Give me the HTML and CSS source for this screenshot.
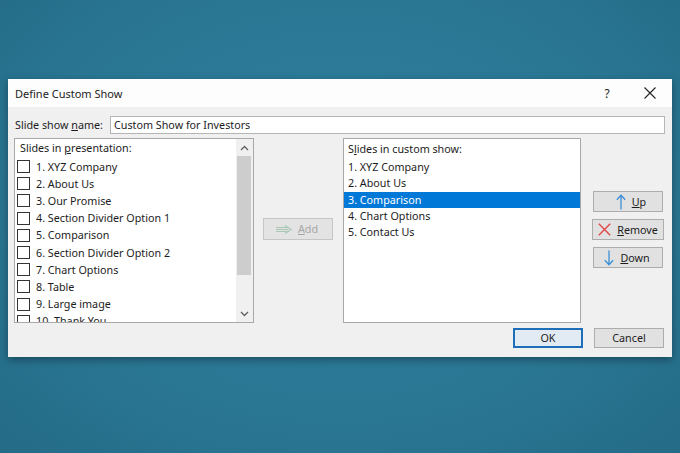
FILE: index.html
```html
<!DOCTYPE html>
<html lang="en">
<head>
<meta charset="utf-8">
<title>Define Custom Show</title>
<link rel="stylesheet" href="styles.css">
</head>
<body>
<div class="stage">
  <div class="dialog">
    <div class="titlebar">
      <span class="title">Define Custom Show</span>
      <span class="help">?</span>
      <span class="close">
        <svg width="12" height="12" viewBox="0 0 12 12"><path d="M0.5 0.5 L11.5 11.5 M11.5 0.5 L0.5 11.5" stroke="#222" stroke-width="1.1" fill="none"/></svg>
      </span>
    </div>
    <div class="content">
      <div class="name-row">
        <span class="name-label">Slide show <u>n</u>ame:</span>
        <div class="name-input">Custom Show for Investors</div>
      </div>
      <div class="main">
        <div class="listbox left-list">
          <div class="list-inner">
            <div class="list-head">Slides in <u>p</u>resentation:</div>
            <div class="check-row"><span class="cb"></span>1. XYZ Company</div>
            <div class="check-row"><span class="cb"></span>2. About Us</div>
            <div class="check-row"><span class="cb"></span>3. Our Promise</div>
            <div class="check-row"><span class="cb"></span>4. Section Divider Option 1</div>
            <div class="check-row"><span class="cb"></span>5. Comparison</div>
            <div class="check-row"><span class="cb"></span>6. Section Divider Option 2</div>
            <div class="check-row"><span class="cb"></span>7. Chart Options</div>
            <div class="check-row"><span class="cb"></span>8. Table</div>
            <div class="check-row"><span class="cb"></span>9. Large image</div>
            <div class="check-row"><span class="cb"></span>10. Thank You</div>
          </div>
          <div class="scrollbar">
            <div class="sb-arrow">
              <svg width="9" height="6" viewBox="0 0 9 6"><path d="M1 5 L4.5 1.5 L8 5" stroke="#606060" stroke-width="1.3" fill="none"/></svg>
            </div>
            <div class="sb-track"><div class="sb-thumb"></div></div>
            <div class="sb-arrow">
              <svg width="9" height="6" viewBox="0 0 9 6"><path d="M1 1 L4.5 4.5 L8 1" stroke="#606060" stroke-width="1.3" fill="none"/></svg>
            </div>
          </div>
        </div>
        <div class="mid">
          <div class="btn add">
            <svg class="ico" width="16" height="9" viewBox="0 0 16 9"><path d="M0 2.5 H11 M0 6.5 H11 M0 4.5 H12 M9 0.5 L15 4.5 L9 8.5" stroke="#aac6b4" stroke-width="1.2" fill="none"/></svg>
            <span><u>A</u>dd</span>
          </div>
        </div>
        <div class="listbox right-list">
          <div class="list-head">S<u>l</u>ides in custom show:</div>
          <div class="row">1. XYZ Company</div>
          <div class="row">2. About Us</div>
          <div class="row selected">3. Comparison</div>
          <div class="row">4. Chart Options</div>
          <div class="row">5. Contact Us</div>
        </div>
        <div class="side">
          <div class="btn side-btn up">
            <svg class="ico" width="10" height="16" viewBox="0 0 10 16"><path d="M5 15.5 V1.5 M0.8 5.8 L5 1.2 L9.2 5.8" stroke="#3d8fd6" stroke-width="1.3" fill="none"/></svg>
            <span><u>U</u>p</span>
          </div>
          <div class="btn side-btn remove">
            <svg class="ico" width="13" height="13" viewBox="0 0 13 13"><path d="M0.8 0.8 L12.2 12.2 M12.2 0.8 L0.8 12.2" stroke="#e0484a" stroke-width="1.4" fill="none"/></svg>
            <span><u>R</u>emove</span>
          </div>
          <div class="btn side-btn down">
            <svg class="ico" width="10" height="16" viewBox="0 0 10 16"><path d="M5 0.5 V14.5 M0.8 10.2 L5 14.8 L9.2 10.2" stroke="#3d8fd6" stroke-width="1.3" fill="none"/></svg>
            <span><u>D</u>own</span>
          </div>
        </div>
      </div>
      <div class="footer">
        <div class="btn dlg-btn ok">OK</div>
        <div class="btn dlg-btn cancel">Cancel</div>
      </div>
    </div>
  </div>
</div>
</body>
</html>
```

FILE: styles.css
```css
* { box-sizing: border-box; }

html, body {
  margin: 0;
  height: 100%;
}

body {
  background: radial-gradient(ellipse at 50% 45%, #2e7f9d 0%, #2a7794 60%, #246b87 100%);
  font-family: "Noto Sans", "Open Sans", sans-serif;
  font-size: 10.75px;
  color: #1c1c1c;
  overflow: hidden;
}

.stage {
  padding: 79px 8px 0 8px;
}

.dialog {
  width: 664px;
  height: 278px;
  background: #f0f0f0;
  box-shadow: 0 3px 8px rgba(0, 0, 0, 0.35);
  display: flex;
  flex-direction: column;
}

.titlebar {
  height: 28px;
  background: #fdfdfd;
  display: flex;
  align-items: center;
  padding-left: 7px;
}

.title {
  font-size: 11px;
  flex: 1;
}

.help {
  font-size: 12px;
  width: 12px;
  text-align: center;
  margin-right: 31px;
}

.close {
  display: flex;
  width: 12px;
  margin-right: 16px;
}

.content {
  padding: 9px 8px 0 6px;
}

.name-row {
  display: flex;
  align-items: center;
  height: 18px;
}

.name-label {
  width: 96px;
  padding-left: 1px;
}

.name-input {
  flex: 1;
  margin-right: -1px;
  height: 18px;
  background: #fff;
  border: 1px solid #b5b5b5;
  padding-left: 3px;
  line-height: 16px;
}

.main {
  display: flex;
  margin-top: 4px;
  height: 185px;
}

.listbox {
  background: #fff;
  border: 1px solid #a9a9a9;
  height: 185px;
  overflow: hidden;
}

.left-list {
  width: 240px;
  display: flex;
}

.list-inner {
  flex: 1;
  overflow: hidden;
}

.left-list .list-head {
  height: 19px;
  line-height: 19px;
  padding-left: 5px;
}

.check-row {
  height: 17.2px;
  display: flex;
  align-items: center;
  padding-left: 2px;
  white-space: nowrap;
}

.cb {
  width: 13px;
  height: 13px;
  border: 1px solid #333;
  background: #fff;
  margin-right: 6px;
  flex: none;
}

.scrollbar {
  width: 17px;
  background: #f0f0f0;
  display: flex;
  flex-direction: column;
}

.sb-arrow {
  height: 17px;
  display: flex;
  align-items: center;
  justify-content: center;
}

.sb-track {
  flex: 1;
  padding: 0 2px 0 1px;
}

.sb-thumb {
  height: 119px;
  background: #cdcdcd;
}

.mid {
  width: 89px;
  padding: 80px 0 0 9px;
}

.btn {
  display: flex;
  align-items: center;
  justify-content: center;
  background: #e1e1e1;
  border: 1px solid #adadad;
  white-space: nowrap;
}

.btn .ico {
  flex: none;
}

.add {
  width: 70px;
  height: 22px;
  color: #a6a6a6;
  border-color: #c6c6c6;
  background: #e3e3e3;
  gap: 6px;
  padding-right: 2px;
}

.right-list {
  width: 238px;
}

.right-list .list-head {
  height: 20px;
  line-height: 20px;
  padding-left: 4px;
}

.row {
  height: 16.3px;
  line-height: 16.3px;
  padding-left: 4px;
}

.row.selected {
  background: #0078d7;
  color: #fff;
}

.side {
  display: flex;
  flex-direction: column;
  gap: 7px;
  padding: 53px 0 0 11px;
}

.side-btn {
  width: 72px;
  height: 21px;
  gap: 6px;
}

.up, .down {
  width: 70px;
  margin-left: 1px;
}

.up { padding-left: 6px; }
.down { padding-right: 2px; }

.footer {
  display: flex;
  justify-content: flex-end;
  gap: 11px;
  margin-top: 5px;
}

.dlg-btn {
  width: 70px;
  height: 20px;
}

.ok {
  border: 2px solid #1f6fb8;
  background: #e2ebf3;
}
```
